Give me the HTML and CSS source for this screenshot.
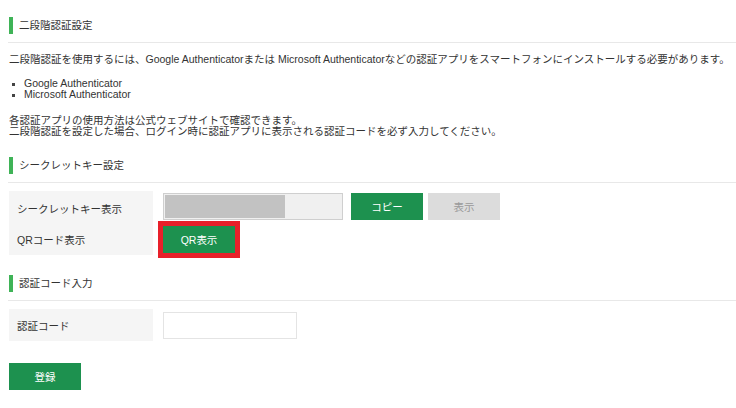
FILE: index.html
```html
<!DOCTYPE html>
<html lang="ja">
<head>
<meta charset="utf-8">
<link rel="stylesheet" href="styles.css">
</head>
<body>
<div class="page">
  <h2 class="sec-title sec-first">二段階認証設定</h2>
  <p class="para">二段階認証を使用するには、Google Authenticatorまたは Microsoft Authenticatorなどの認証アプリをスマートフォンにインストールする必要があります。</p>
  <ul class="apps">
    <li>Google Authenticator</li>
    <li>Microsoft Authenticator</li>
  </ul>
  <p class="para">各認証アプリの使用方法は公式ウェブサイトで確認できます。<br>二段階認証を設定した場合、ログイン時に認証アプリに表示される認証コードを必ず入力してください。</p>

  <h2 class="sec-title">シークレットキー設定</h2>
  <div class="form-grid">
    <div class="label-col">
      <div class="label-row r1">シークレットキー表示</div>
      <div class="label-row r2">QRコード表示</div>
    </div>
    <div class="field-col">
      <div class="field-row">
        <div class="secret-box"><span class="secret-mask"></span></div>
        <button class="btn btn-green btn-copy">コピー</button>
        <button class="btn btn-grey">表示</button>
      </div>
      <div class="field-row qr-row">
        <div class="qr-outline"><button class="btn btn-green btn-qr">QR表示</button></div>
      </div>
    </div>
  </div>

  <h2 class="sec-title">認証コード入力</h2>
  <div class="code-row">
    <div class="label-cell">認証コード</div>
    <div class="code-input"></div>
  </div>
  <button class="btn btn-green btn-register">登録</button>
</div>
</body>
</html>
```
FILE: styles.css
```css
html, body {
  margin: 0;
  padding: 0;
  background: #fff;
}
body {
  font-family: "Liberation Sans", "Noto Sans CJK JP", sans-serif;
  font-size: 10.5px;
  color: #333;
}
.page {
  padding: 17px 0 0 9px;
}
.sec-title {
  margin: 0;
  font-size: 10.5px;
  font-weight: normal;
  line-height: 17px;
  padding-left: 6px;
  border-left: 4px solid #3fb357;
  position: relative;
}
.sec-title::after {
  content: "";
  position: absolute;
  left: -5px;
  right: 0;
  top: 25px;
  height: 1px;
  background: #e8e8e8;
}
.para {
  margin: 20px 0 0 0;
  line-height: 11px;
  white-space: nowrap;
}
.apps {
  margin: 13px 0 0 0;
  padding-left: 15px;
  line-height: 11px;
}
.apps li {
  list-style: none;
  position: relative;
}
.apps li::before {
  content: "";
  position: absolute;
  left: -12px;
  top: 5px;
  width: 3px;
  height: 3px;
  background: #444;
}
.apps + .para {
  margin-top: 15px;
}
.para + .sec-title {
  margin-top: 20px;
}
.form-grid {
  display: flex;
  margin-top: 17px;
}
.label-col {
  width: 144px;
  background: #f5f5f5;
  height: 64px;
  display: flex;
  flex-direction: column;
  padding-left: 8px;
  box-sizing: border-box;
}
.label-row {
  height: 31px;
  display: flex;
  align-items: center;
}
.label-row.r1 { height: 32px; padding-top: 1px; }
.field-col {
  margin-left: 10px;
  padding-top: 2px;
}
.field-row {
  display: flex;
  align-items: center;
  gap: 5px;
}
.secret-box {
  width: 180px;
  height: 27px;
  box-sizing: border-box;
  border: 1px solid #cfcfcf;
  background: #f0f0f0;
  padding: 1px;
  margin-right: 3px;
}
.secret-mask {
  display: block;
  width: 120px;
  height: 23px;
  background: #c2c2c2;
}
.btn {
  border: none;
  font-family: "Liberation Sans", "Noto Sans CJK JP", sans-serif;
  font-size: 10.5px;
  padding: 0;
  margin: 0;
  height: 27px;
  width: 72px;
  cursor: pointer;
}
.btn-green {
  background: #1d914f;
  color: #fff;
}
.btn-grey {
  background: #dcdcdc;
  color: #999;
}
.qr-row {
  margin-top: 1px;
  margin-left: -5px;
}
.qr-outline {
  border: 5px solid #e8202a;
  line-height: 0;
}
.form-grid + .sec-title {
  margin-top: 17px;
}
.code-row {
  display: flex;
  align-items: center;
  margin-top: 17px;
}
.label-cell {
  width: 144px;
  height: 32px;
  background: #f5f5f5;
  box-sizing: border-box;
  padding-left: 8px;
  display: flex;
  align-items: center;
}
.code-input {
  width: 134px;
  height: 27px;
  box-sizing: border-box;
  border: 1px solid #e4e4e4;
  background: #fff;
  margin-left: 10px;
}
.btn-register {
  display: block;
  margin-top: 22px;
  height: 27px;
}
```
